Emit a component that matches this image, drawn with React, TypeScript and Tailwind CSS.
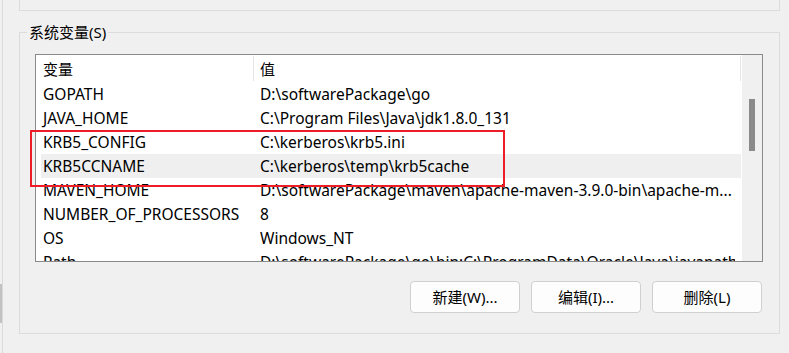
import React from "react";

const rows: [string, string][] = [
  ["GOPATH", "D:\\softwarePackage\\go"],
  ["JAVA_HOME", "C:\\Program Files\\Java\\jdk1.8.0_131"],
  ["KRB5_CONFIG", "C:\\kerberos\\krb5.ini"],
  ["KRB5CCNAME", "C:\\kerberos\\temp\\krb5cache"],
  ["MAVEN_HOME", "D:\\softwarePackage\\maven\\apache-maven-3.9.0-bin\\apache-m..."],
  ["NUMBER_OF_PROCESSORS", "8"],
  ["OS", "Windows_NT"],
  ["Path", "D:\\softwarePackage\\go\\bin;C:\\ProgramData\\Oracle\\Java\\javapath;..."],
];

const font = { fontFamily: '"Noto Sans", "Noto Sans CJK SC", sans-serif' };

export default function App() {
  return (
    <div
      className="relative flex h-[353px] w-[789px] overflow-hidden bg-[#f0f0f0] text-[15.5px] text-black"
      style={font}
    >
      {/* left edge strip */}
      <div className="flex h-full w-[2px] flex-col">
        <div className="h-[284px]" />
        <div className="h-[39px] bg-[#c2c2c2]" />
      </div>
      <div className="h-full w-px bg-[#dadada]" />

      <div className="flex flex-col pl-[16px]">
        {/* upper group box remnant */}
        <div className="h-[11px] w-[761px] border-x border-b border-[#dcdcdc]" />

        {/* system variables group box */}
        <div className="relative mt-[21px] h-[302px] w-[761px] border border-[#dcdcdc] pl-[15px] pt-[21px]">
          <div className="absolute left-[7px] top-[-11px] bg-[#f0f0f0] px-[2px] text-[15px] leading-[20px]">
            系统变量(S)
          </div>

          {/* list box */}
          <div className="flex h-[208px] w-[728px] border border-[#8a8a8a] bg-white">
            <div className="flex w-[706px] flex-col overflow-hidden">
              {/* header */}
              <div className="flex h-[27px] shrink-0 items-center text-[15px]">
                <div className="w-[217px] pl-[7px] leading-[20px]">变量</div>
                <div className="h-[25px] w-px bg-[#e5e5e5]" />
                <div className="w-[486px] pl-[6px] leading-[20px]">值</div>
                <div className="h-[25px] w-px bg-[#e5e5e5]" />
              </div>
              {rows.map(([k, v]) => (
                <div
                  key={k}
                  className={
                    "ml-[5px] flex h-[24px] w-[700px] shrink-0 items-center whitespace-nowrap " +
                    (k === "KRB5CCNAME" ? "bg-[#efefef]" : "")
                  }
                >
                  <div className="w-[219px] shrink-0 pl-[2px] leading-[20px]">{k}</div>
                  <div className="w-[475px] overflow-hidden leading-[20px]">{v}</div>
                </div>
              ))}
            </div>
            {/* scrollbar */}
            <div className="flex w-[20px] flex-col bg-[#f0f0f0] pl-[7px] pt-[44px]">
              <div className="h-[52px] w-[6px] bg-[#8a8a8a]" />
            </div>
          </div>

          {/* buttons */}
          <div className="mt-[19px] flex w-[728px] justify-end gap-[11px] pr-[1px]">
            {["新建(W)...", "编辑(I)...", "删除(L)"].map((b) => (
              <div
                key={b}
                className="flex h-[32px] w-[110px] items-center justify-center rounded-[4px] border border-[#d0d0d0] bg-[#fdfdfd] text-[15px] leading-[20px]"
              >
                {b}
              </div>
            ))}
          </div>
        </div>
      </div>

      {/* red annotation box */}
      <div className="absolute left-[30px] top-[130px] h-[57px] w-[475px] border-2 border-[#ee1c24]" />
    </div>
  );
}
